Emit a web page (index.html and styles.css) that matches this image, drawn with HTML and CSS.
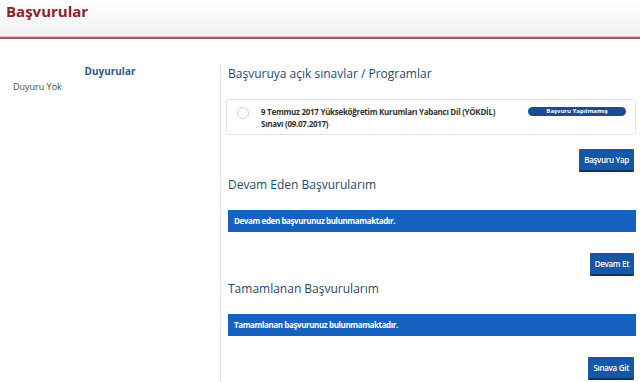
FILE: index.html
```html
<!DOCTYPE html>
<html lang="tr">
<head>
    <meta charset="UTF-8">
    <meta name="viewport" content="width=device-width, initial-scale=1.0">
    <title>Başvurular</title>
    <link rel="stylesheet" href="styles.css">
</head>
<body>
    <div class="page-header">
        <h1>Başvurular</h1>
    </div>

    <div class="layout">
        <!-- Duyurular -->
        <div class="sidebar">
            <h3>Duyurular</h3>
            <p>Duyuru Yok</p>
        </div>

        <div class="main">
            <h2>Başvuruya açık sınavlar / Programlar</h2>

            <div class="exam-card">
                <span class="radio"></span>
                <div class="exam-name">
                    9 Temmuz 2017 Yükseköğretim Kurumları Yabancı Dil (YÖKDİL)<br>
                    Sınavı (09.07.2017)
                </div>
                <span class="badge">Başvuru Yapılmamış</span>
            </div>
            <div class="actions first">
                <button class="btn">Başvuru Yap</button>
            </div>

            <h2>Devam Eden Başvurularım</h2>
            <div class="info-bar">Devam eden başvurunuz bulunmamaktadır.</div>
            <div class="actions">
                <button class="btn">Devam Et</button>
            </div>

            <h2>Tamamlanan Başvurularım</h2>
            <div class="info-bar">Tamamlanan başvurunuz bulunmamaktadır.</div>
            <div class="actions">
                <button class="btn">Sınava Git</button>
            </div>
        </div>
    </div>
</body>
</html>
```

FILE: styles.css
```css
body {
    font-family: "Open Sans", "Noto Sans", sans-serif;
    background-color: #fff;
    margin: 0;
    color: #333;
}

.page-header {
    height: 37px;
    background: linear-gradient(#ffffff, #f1f1f1);
    border-bottom: 2px solid #a4585d;
    box-shadow: 0 -1px 0 #e8c4c6 inset;
}

.page-header h1 {
    margin: 0;
    padding: 0 6px;
    font-size: 15px;
    line-height: 22px;
    color: #8b2330;
    font-weight: 700;
}

.layout {
    display: flex;
    margin-top: 24px;
}

.sidebar {
    width: 220px;
    flex-shrink: 0;
}

.sidebar h3 {
    margin: 0;
    padding-top: 1px;
    text-align: center;
    font-size: 10px;
    line-height: 14px;
    color: #2b5c8c;
    font-weight: 700;
}

.sidebar p {
    margin: 3px 0 0 13px;
    font-size: 9px;
    line-height: 12px;
    color: #444;
}

.main {
    flex: 1;
    border-left: 1px solid #e8e8e8;
    padding: 0 4px 0 5px;
    min-height: 330px;
}

.main h2 {
    margin: 3px 0 0 2px;
    font-size: 12px;
    line-height: 20px;
    font-weight: 400;
    color: #1d4a76;
}

.main h2:first-child {
    margin-top: 1px;
}

.exam-card {
    display: flex;
    align-items: flex-start;
    margin-top: 15px;
    padding: 6px 9px 4px 10px;
    border: 1px solid #e4e4e4;
    border-radius: 3px;
}

.radio {
    width: 10px;
    height: 10px;
    margin-top: 1px;
    border: 1px solid #d4d4d4;
    border-radius: 50%;
    flex-shrink: 0;
}

.exam-name {
    flex: 1;
    margin-left: 12px;
    font-size: 8px;
    line-height: 12px;
    letter-spacing: -0.28px;
    font-weight: 700;
    color: #333;
}

.badge {
    margin-top: 1px;
    width: 98px;
    height: 9px;
    line-height: 9px;
    background-color: #1b4c92;
    color: #fff;
    border-radius: 5px;
    font-size: 6px;
    font-weight: 700;
    text-align: center;
}

.actions {
    display: flex;
    justify-content: flex-end;
    margin-top: 21px;
    padding-right: 2px;
}

.actions.first {
    margin-top: 14px;
}

.btn {
    height: 23px;
    padding: 0 5px;
    background-color: #1558a8;
    color: #fff;
    border: none;
    border-bottom: 2px solid #0b3369;
    border-radius: 1px;
    font-family: inherit;
    font-size: 8px;
    letter-spacing: -0.3px;
    font-weight: 600;
}

.info-bar {
    margin-top: 15px;
    margin-left: 2px;
    height: 22px;
    line-height: 22px;
    padding-left: 6px;
    background-color: #1762bf;
    color: #fff;
    font-size: 8px;
    letter-spacing: -0.4px;
    font-weight: 700;
}
```
